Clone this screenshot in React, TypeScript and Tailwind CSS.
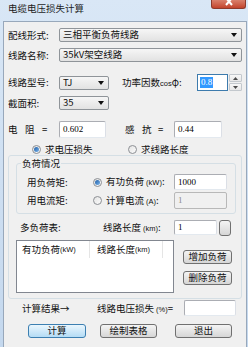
import React from 'react';

const font = "font-['Noto_Sans_CJK_SC','Liberation_Sans',sans-serif]";

function Small({ children }: { children: React.ReactNode }) {
  return <span className="text-[7.5px] font-['Liberation_Sans',sans-serif]">{children}</span>;
}

function Select({ value, w }: { value: string; w: string }) {
  return (
    <div className={`${w} h-[14px] flex items-center justify-between border border-[#8f9499] rounded-[2px] bg-linear-to-b from-[#f6f6f6] to-[#e2e2e2] pl-[3px] pr-[4px]`}>
      <span className="leading-none">{value}</span>
      <svg width="6" height="4" viewBox="0 0 6 4"><path d="M0 0h6L3 4z" fill="#111" /></svg>
    </div>
  );
}

function TextBox({ value, w, h = 'h-[16px]', disabled }: { value?: string; w: string; h?: string; disabled?: boolean }) {
  return (
    <div
      className={`${w} ${h} flex items-center pl-[3px] rounded-[2px] border ${
        disabled ? 'border-[#b8b8b8] bg-[#f0f0f0] text-[#8a8a8a]' : 'border-[#abadb3] border-b-[#e3e9ef] border-r-[#dbdfe6] bg-white text-black'
      } text-[9px] leading-none font-['Liberation_Serif',serif]`}
    >
      {value}
    </div>
  );
}

function Radio({ checked, label, w }: { checked?: boolean; label: React.ReactNode; w: string }) {
  return (
    <div className={`${w} flex items-center gap-[4px]`}>
      <span className="w-[9px] h-[9px] rounded-full border border-[#8c8f94] bg-linear-to-br from-[#e4e4e4] to-[#fbfbfb] flex items-center justify-center">
        {checked && <span className="w-[5px] h-[5px] rounded-full bg-linear-to-br from-[#1f5fa6] to-[#79b4eb]" />}
      </span>
      <span className="leading-none">{label}</span>
    </div>
  );
}

function Btn({ label, w, primary }: { label: string; w: string; primary?: boolean }) {
  return (
    <div
      className={`${w} h-[14px] flex items-center justify-center rounded-[3px] border ${
        primary ? 'border-[#3c7fb1] bg-linear-to-b from-[#eaf6fd] to-[#b4dcf5]' : 'border-[#707070] bg-linear-to-b from-[#f4f4f4] to-[#d6d6d6]'
      } leading-none`}
    >
      {label}
    </div>
  );
}

export default function App() {
  return (
    <div className={`w-[248px] h-[347px] overflow-hidden bg-linear-to-b from-[#d9e7f6] to-[#c4d8ee] flex flex-col text-[9.5px] text-[#111] ${font}`}>
      <div className="h-[21px] flex items-start shrink-0">
        <span className="pl-[8px] pt-[2px] text-[9.5px] leading-[12px] text-[#1e1e1e]">电缆电压损失计算</span>
        <div className="ml-auto mr-[2px] w-[35px] h-[9px] rounded-b-[3px] border border-t-0 border-[#8d3a2c] bg-linear-to-b from-[#d9806c] to-[#c2432c] flex justify-center overflow-hidden">
          <svg width="10" height="9" viewBox="0 0 10 9" className="-mt-[2px]">
            <path d="M2 0l6 7M8 0l-6 7" stroke="#fff" strokeWidth="2" />
          </svg>
        </div>
      </div>
      <div className="ml-[3px] mr-[1px] flex-1 border-l border-t border-r border-[#98a8bb] bg-[#f0f0f0] flex flex-col">
        <div className="mt-[6px] h-[14px] pl-[4px] flex items-center">
          <span className="w-[51px]">配线形式:</span>
          <Select value="三相平衡负荷线路" w="w-[183px]" />
        </div>
        <div className="mt-[6px] h-[14px] pl-[4px] flex items-center">
          <span className="w-[51px]">线路名称:</span>
          <Select value="35kV架空线路" w="w-[183px]" />
        </div>
        <div className="mt-[12px] h-[17px] pl-[4px] flex items-center">
          <span className="w-[51px]">线路型号:</span>
          <Select value="TJ" w="w-[50px]" />
          <span className="ml-[13px] w-[75px]">功率因数<Small>cos</Small>φ:</span>
          <div className="w-[31px] h-[17px] border border-[#3d7bad] bg-white flex items-center pl-[2px]">
            <span className="bg-[#3399ff] text-white text-[9px] leading-[11px] px-[1px] font-['Liberation_Serif',serif]">0.8</span>
          </div>
          <div className="w-[14px] h-[17px] flex flex-col gap-[1px] pl-[1px]">
            <div className="flex-1 rounded-[1px] border border-[#c3c8cd] bg-linear-to-b from-[#f7f7f7] to-[#e7e7e7] flex items-center justify-center">
              <svg width="5" height="3" viewBox="0 0 5 3"><path d="M0 3h5L2.5 0z" fill="#4b4b4b" /></svg>
            </div>
            <div className="flex-1 rounded-[1px] border border-[#c3c8cd] bg-linear-to-b from-[#f7f7f7] to-[#e7e7e7] flex items-center justify-center">
              <svg width="5" height="3" viewBox="0 0 5 3"><path d="M0 0h5L2.5 3z" fill="#4b4b4b" /></svg>
            </div>
          </div>
        </div>
        <div className="mt-[5px] h-[14px] pl-[4px] flex items-center">
          <span className="w-[51px]">截面积:</span>
          <Select value="35" w="w-[50px]" />
        </div>
        <div className="mt-[11px] h-[17px] pl-[4px] flex items-center">
          <span className="w-[17px]">电</span>
          <span className="w-[17px]">阻</span>
          <span className="w-[17px]">=</span>
          <TextBox value="0.602" w="w-[47px]" h="h-[17px]" />
          <span className="ml-[19px] w-[17px]">感</span>
          <span className="w-[16px]">抗</span>
          <span className="w-[16px]">=</span>
          <TextBox value="0.44" w="w-[48px]" h="h-[17px]" />
        </div>
        <div className="mt-[6px] h-[11px] pl-[28px] flex items-center">
          <Radio checked label="求电压损失" w="w-[96px]" />
          <Radio label="求线路长度" w="w-[90px]" />
        </div>
        <div className="ml-[4px] w-[234px] h-[144px] border border-[#d5dfe5] rounded-[3px] flex flex-col">
          <div className="relative mt-[7px] ml-[7px] w-[220px] h-[51px] border border-[#d5dfe5] rounded-[3px] flex flex-col">
            <span className="absolute -top-[7px] left-[4px] px-[1px] bg-[#f0f0f0] leading-[12px]">负荷情况</span>
            <div className="mt-[10px] h-[16px] pl-[10px] flex items-center">
              <span className="w-[66px]">用负荷矩:</span>
              <Radio checked label={<>有功负荷<Small> (kW)</Small>:</>} w="w-[81px]" />
              <TextBox value="1000" w="w-[53px]" />
            </div>
            <div className="mt-[2px] h-[17px] pl-[10px] flex items-center">
              <span className="w-[66px]">用电流矩:</span>
              <Radio label={<>计算电流<Small> (A)</Small>:</>} w="w-[81px]" />
              <TextBox value="1" w="w-[53px]" h="h-[17px]" disabled />
            </div>
          </div>
          <div className="mt-[5px] h-[17px] pl-[11px] flex items-center">
            <span className="w-[83px]">多负荷表:</span>
            <span className="w-[71px]">线路长度<Small> (km)</Small>:</span>
            <TextBox value="1" w="w-[43px]" h="h-[15px]" />
            <div className="ml-[2px] w-[12px] h-[16px] rounded-[3px] border border-[#707070] bg-linear-to-b from-[#f4f4f4] to-[#d6d6d6]" />
          </div>
          <div className="mt-[4px] ml-[7px] flex">
            <div className="w-[158px] h-[53px] border border-[#828790] bg-white">
              <div className="h-[17px] flex items-center">
                <span className="w-[73px] h-full flex items-center pl-[5px] border-r border-[#e5e5e5]">有功负荷<Small> (kW)</Small></span>
                <span className="w-[73px] h-full flex items-center pl-[7px] border-r border-[#e5e5e5]">线路长度<Small> (km)</Small></span>
              </div>
            </div>
            <div className="ml-[9px] w-[49px] flex flex-col">
              <div className="mt-[10px]"><Btn label="增加负荷" w="w-[49px]" /></div>
              <div className="mt-[7px]"><Btn label="删除负荷" w="w-[49px]" /></div>
            </div>
          </div>
        </div>
        <div className="mt-[1px] h-[16px] pl-[18px] flex items-center">
          <span className="w-[75px]">计算结果→</span>
          <span className="w-[87px]">线路电压损失<Small> (%)</Small>=</span>
          <TextBox w="w-[52px]" />
        </div>
        <div className="mt-[8px] h-[14px] pl-[24px] flex items-center">
          <Btn label="计算" w="w-[58px]" primary />
          <div className="ml-[14px]"><Btn label="绘制表格" w="w-[57px]" /></div>
          <div className="ml-[18px]"><Btn label="退出" w="w-[57px]" /></div>
        </div>
      </div>
    </div>
  );
}
